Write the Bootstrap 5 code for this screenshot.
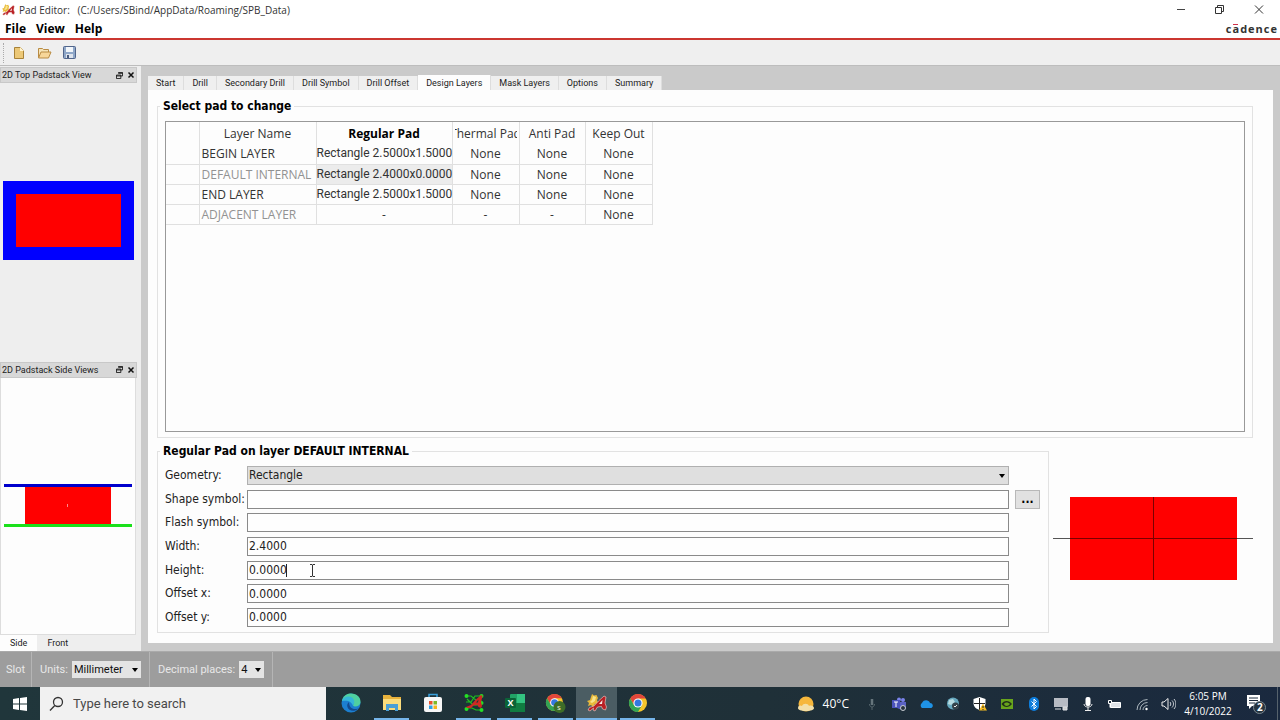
<!DOCTYPE html>
<html lang="en">
<head>
<meta charset="utf-8">
<meta name="viewport" content="width=device-width, initial-scale=1">
<title>Pad Editor</title>
<link rel="stylesheet" href="https://cdn.jsdelivr.net/npm/bootstrap@5.3.0/dist/css/bootstrap.min.css">
<style>
  :root { --ui: "DejaVu Sans Condensed", "DejaVu Sans", sans-serif; --segoe: "Open Sans", "Noto Sans", sans-serif; --small: Roboto, "Open Sans", sans-serif; }
  body { font: 12px/16px var(--segoe); color: #222; background: #cacaca; }
  svg { display: block; flex: none; }
  button { border: 0; background: none; padding: 0; color: inherit; }
  a { color: inherit; text-decoration: none; }

  .titlebar { height: 20px; background: #fff; padding-left: 2px; padding-right: 2px; }
  .titlebar .caption { font: 10px/16px var(--segoe); white-space: pre; color: #333; }
  .win-btn { width: 39px; height: 20px; }
  .menubar { height: 20px; background: #fff; border-bottom: 2px solid #cb3630; padding-left: 5px; gap: 10px; font: bold 12px/18px var(--segoe); color: #000; }
  .brand-word { font: bold 11px/14px var(--segoe); letter-spacing: 1px; color: #333; padding-right: 2px; }
  .toolstrip { height: 26px; background: #efefef; border-bottom: 1px solid #bdbdbd; }
  .tool-icons { gap: 11px; padding-left: 8px; }
  .grip { width: 1px; height: 20px; border-left: 1px dotted #aaa; margin-left: 3px; }

  .body-area { min-height: 0; }
  .docks { width: 141px; background: #eee; padding-top: 1px; }
  .dock-top { flex: 51 1 0; }
  .dock-side { flex: 50 1 0; }
  .dock-title { height: 16px; width: 137px; background: #d8d8d8; border: 1px solid #c8c8c8; font: 9px/14px var(--small); padding: 0 1px; gap: 4px; }
  .top-canvas { padding: 0 0 3px 3px; }
  .side-canvas { width: 136px; background: #fdfdfd; border: 1px solid #ddd; border-top: 0; }
  .dock-tabs { font: 9px/14px var(--small); height: 16px; }
  .dock-tabs button { padding: 0 10px; }
  .dock-tabs .on { background: #fdfdfd; }

  .work { padding: 9px 7px 8px 7px; min-width: 0; }
  .tabs { font: 9px/14px var(--small); height: 15px; }
  .tabs button { background: #efefef; border-right: 1px solid #ddd; padding: 0 8px; height: 14px; align-self: end; white-space: nowrap; }
  .tabs .on { background: #fdfdfd; height: 15px; }
  .sheet { background: #fdfdfd; padding: 16px 20px 10px 9px; gap: 13px; }
  .group { border: 1px solid #e2e2e2; padding: 0 7px 5px; position: relative; min-width: 0; }
  .group-name { font: bold 12px/16px var(--ui); color: #000; background: #fdfdfd; padding: 0 3px; margin: -9px 0 7px -5px; align-self: start; }
  .layer-box { border: 1px solid #999; }
  .layers { table-layout: fixed; width: 486px; border-collapse: collapse; text-align: center; color: #333; }
  .layers th, .layers td { border: 1px solid #e0e0e0; border-top: 0; border-left: 0; padding: 0 1px; height: 20px; line-height: 17px; white-space: nowrap; font-weight: 400; }
  .layers thead th { height: 22px; border-bottom: 0; }
  .layers .clip { display: flex; justify-content: center; overflow: hidden; margin: 0 1px; }
  .layers tbody th { text-align: left; padding-left: 2px; }
  .layers .geom { font-family: var(--small); padding: 0; }
  .dim { color: #929292; }
  .picked { background: #ececec; }

  .fields { display: grid; grid-template-columns: 82px minmax(0, 1fr) 31px; align-content: space-between; min-height: 161px; font: 12px/19px var(--ui); color: #222; }
  .fields .box { height: 19px; border: 1px solid #8a8a8a; border-radius: 0; padding: 0 1px; font: 12px/17px var(--ui); color: #222; background-color: #fefefe; min-height: 0; width: 100%; }
  .drop { appearance: none; border-radius: 0; background: #e1e1e1 url("data:image/svg+xml,%3Csvg xmlns='http://www.w3.org/2000/svg' width='6' height='4'%3E%3Cpath d='M0 0h6L3 4z'/%3E%3C/svg%3E") no-repeat right 3px center; }
  .fields .drop { background-color: #dfdfdf; border-color: #b0b0b0; }
  .more { width: 25px; height: 19px; background: #e1e1e1; border: 1px solid #b8b8b8; font: bold 12px/14px var(--ui); color: #000; justify-self: end; }
  .caret { position: absolute; left: 39px; top: 3px; width: 1px; height: 13px; background: #222; }
  .ibeam { position: absolute; left: 62px; top: 3px; }
  .preview { margin: 0 0 6px 4px; }

  .status { height: 36px; background: #9d9d9d; border-top: 1px solid #aaa; color: #e8e8e8; font-size: 11px; font-family: var(--small); }
  .status .cell { border-right: 1px solid #b5b5b5; height: 100%; padding: 0 8px; gap: 4px; }
  .status .cell:first-child { padding: 0 6px; }
  .status .drop { height: 17px; border: 0; padding: 0 2px; background-color: #e4e4e4; font: 11px/16px var(--small); color: #111; }

  .taskbar { height: 33px; background: linear-gradient(90deg, #20363b, #1f3038 60%, #1a293f); color: #fff; }
  .start { width: 40px; height: 33px; }
  .find { width: 286px; height: 33px; background: #f1f1f1; }
  .find input { border: 0; background: none; font: 13px/20px var(--small); outline: 0; min-width: 0; }
  .find input::placeholder { color: #484848; opacity: 1; }
  .apps { padding-left: 4px; }
  .app { width: 41px; height: 33px; border-bottom: 2px solid transparent; background-clip: padding-box; }
  .run::after { content: ""; position: absolute; left: 3px; right: 3px; bottom: -2px; height: 2px; background: #76b5ea; }
  .run.front { background: #4b5d63; }
  .run.front::after { left: 0; right: 0; }
  .weather { font-size: 12px; margin-right: 9px; }
  .tray button { width: 27px; height: 33px; }
  .clock { width: 52px; font-size: 10px; line-height: 15px; text-align: center; white-space: nowrap; }
  .note { width: 44px; height: 33px; border-right: 1px solid #56626c; margin-right: 2px; }
</style>
</head>
<body class="d-flex flex-column vh-100 overflow-hidden">

<svg width="0" height="0" class="position-absolute" aria-hidden="true">
  <defs>
    <symbol id="pad" viewBox="0 0 20 20">
      <path d="M5 1l2 1.500L9.500 2 11 5l-1 2 1 3-3 1-2 3-2-2-3 1 1-3-2-2 3-1 1-3z" fill="#e9b93a"/>
      <path d="M6 3l3 1-1 4-3 2-2-1 2-2z" fill="#f8e48b"/>
      <path d="M1 17l1.500-2.500L7 13l4.500-5L17 3l2 1-1 6 1.500 4-1 3-3-1-1-2.500-4 .5-2.500 4-2-1 .5-2L3 18z" fill="#b91f24" stroke="#f0d8d0" stroke-width=".6"/>
      <path d="M12 11l3.500-4-.5 4z" fill="#f8ece8"/>
    </symbol>
    <symbol id="chrome" viewBox="0 0 20 20">
      <circle cx="10" cy="10" r="9" fill="#f5c52c"/>
      <path d="M2.200 5.500A9 9 0 0 1 17.800 5.500H10L6 12z" fill="#e2463b"/>
      <path d="M2.200 5.500A9 9 0 0 0 10 19l4-6.700H6z" fill="#33a455"/>
      <circle cx="10" cy="10" r="4.600" fill="#fff"/><circle cx="10" cy="10" r="3.500" fill="#3478e0"/>
    </symbol>
    <symbol id="float" viewBox="0 0 8 8"><path d="M2.500 .5h5v4h-2M.5 3.500h5v4h-5zM2.500 1.500h5M.5 4.500h5" fill="none" stroke="#111"/></symbol>
    <symbol id="shut" viewBox="0 0 8 8"><path d="M1.500 1.500l5 5M6.500 1.500l-5 5" stroke="#111" stroke-width="1.500"/></symbol>
  </defs>
</svg>

<header>
  <div class="titlebar d-flex align-items-center">
    <svg width="13" height="14"><use href="#pad"/></svg>
    <span class="caption ms-1">Pad Editor:   (C:/Users/SBind/AppData/Roaming/SPB_Data)</span>
    <div class="ms-auto d-flex">
      <button class="win-btn d-grid" aria-label="Minimize"><svg class="m-auto" width="10" height="10"><path d="M1 4.500h8" stroke="#444"/></svg></button>
      <button class="win-btn d-grid" aria-label="Restore"><svg class="m-auto" width="10" height="10"><path d="M.5 2.500h6v6h-6zM2.500 2V.5h6v6H7" fill="none" stroke="#333"/></svg></button>
      <button class="win-btn d-grid" aria-label="Close"><svg class="m-auto" width="10" height="10"><path d="M1 .5l8 8M9 .5l-8 8" stroke="#333"/></svg></button>
    </div>
  </div>
  <nav class="menubar d-flex align-items-center">
    <a href="#">File</a><a href="#">View</a><a href="#">Help</a>
    <span class="brand-word ms-auto">c<span class="position-relative">a<svg class="position-absolute" style="left:1px;top:3px" width="5" height="1"><path d="M0 .5h5" stroke="#d0304a"/></svg></span>dence</span>
  </nav>
  <div class="toolstrip d-flex align-items-center">
    <div class="grip"></div>
    <div class="tool-icons d-flex align-items-center">
      <button aria-label="New"><svg width="14" height="14"><path d="M2.500 1.500h6l3 3v8h-9z" fill="#ecc877" stroke="#a88238"/><path d="M8 1l4 4H8z" fill="#fff3d0"/></svg></button>
      <button aria-label="Open"><svg width="15" height="14"><path d="M1.500 11.500v-9h4l1 1h5v3" fill="#f6e4b8" stroke="#b98b43"/><path d="M1.500 12l2.500-6h10l-2.500 6z" fill="#f7d699" stroke="#b98b43"/></svg></button>
      <button aria-label="Save"><svg width="13" height="13"><rect x=".5" y=".5" width="12" height="12" rx="1" fill="#8fa7c8" stroke="#51658b"/><path d="M3 1h7v5H3z" fill="#f2f6fa"/><path d="M3 8h7v4H3z" fill="#dde3ec"/><path d="M4 9h2v3H4z" fill="#485a7e"/></svg></button>
    </div>
  </div>
</header>

<main class="body-area d-flex flex-grow-1">
  <aside class="docks d-flex flex-column flex-shrink-0">
    <section class="dock-top d-flex flex-column">
      <div class="dock-title d-flex align-items-center">
        <span class="me-auto">2D Top Padstack View</span>
        <button aria-label="Float"><svg width="7" height="7"><use href="#float"/></svg></button>
        <button aria-label="Close"><svg width="8" height="8"><use href="#shut"/></svg></button>
      </div>
      <div class="top-canvas flex-grow-1 d-flex align-items-center">
        <svg width="131" height="79"><path fill="#00f" d="M0 0h131v79H0z"/><path fill="#f00" d="M13 13h105v53H13z"/></svg>
      </div>
    </section>
    <section class="dock-side d-flex flex-column">
      <div class="dock-title d-flex align-items-center">
        <span class="me-auto">2D Padstack Side Views</span>
        <button aria-label="Float"><svg width="7" height="7"><use href="#float"/></svg></button>
        <button aria-label="Close"><svg width="8" height="8"><use href="#shut"/></svg></button>
      </div>
      <div class="side-canvas flex-grow-1 d-flex align-items-center justify-content-center">
        <svg width="128" height="43"><path fill="#f00" d="M21 2h86v39H21z"/><path fill="#00c" d="M0 0h128v3H0z"/><path fill="#1be01b" d="M0 40h128v3H0z"/><path d="M63.500 20v3" stroke="#ff8a8a"/></svg>
      </div>
      <div class="dock-tabs d-flex"><button class="on">Side</button><button>Front</button></div>
    </section>
  </aside>

  <div class="work flex-grow-1 d-flex flex-column">
    <div class="tabs d-flex" role="tablist">
      <button>Start</button><button>Drill</button><button>Secondary Drill</button><button>Drill Symbol</button><button>Drill Offset</button><button class="on">Design Layers</button><button>Mask Layers</button><button>Options</button><button>Summary</button>
    </div>
    <div class="sheet flex-grow-1 d-flex flex-column">
      <section class="group flex-grow-1 d-flex flex-column">
        <h2 class="group-name">Select pad to change</h2>
        <div class="layer-box flex-grow-1">
          <table class="layers">
            <colgroup><col style="width:33px"><col style="width:117px"><col style="width:136px"><col style="width:67px"><col style="width:66px"><col style="width:67px"></colgroup>
            <thead><tr><th></th><th>Layer Name</th><th class="fw-bold text-black">Regular Pad</th><th><span class="clip">Thermal Pad</span></th><th>Anti Pad</th><th>Keep Out</th></tr></thead>
            <tbody>
              <tr><td></td><th>BEGIN LAYER</th><td class="geom">Rectangle 2.5000x1.5000</td><td>None</td><td>None</td><td>None</td></tr>
              <tr><td></td><th class="dim">DEFAULT INTERNAL</th><td class="geom picked">Rectangle 2.4000x0.0000</td><td>None</td><td>None</td><td>None</td></tr>
              <tr><td></td><th>END LAYER</th><td class="geom">Rectangle 2.5000x1.5000</td><td>None</td><td>None</td><td>None</td></tr>
              <tr><td></td><th class="dim">ADJACENT LAYER</th><td>-</td><td>-</td><td>-</td><td>None</td></tr>
            </tbody>
          </table>
        </div>
      </section>
      <div class="d-flex">
        <section class="group flex-grow-1 d-flex flex-column pe-2">
          <h2 class="group-name">Regular Pad on layer DEFAULT INTERNAL</h2>
          <form class="fields">
            <label for="geo">Geometry:</label><select id="geo" class="box drop"><option>Rectangle</option></select><span></span>
            <label for="shp">Shape symbol:</label><input id="shp" class="box"><button type="button" class="more">...</button>
            <label for="fls">Flash symbol:</label><input id="fls" class="box"><span></span>
            <label for="wid">Width:</label><input id="wid" class="box" value="2.4000"><span></span>
            <label for="hei">Height:</label><div class="position-relative"><input id="hei" class="box d-block" value="0.0000"><span class="caret"></span><svg class="ibeam" width="7" height="13"><path d="M1 .5h2l.5.5.5-.5h2M3.500 1v11M1 12.500h2l.5-.5.5.5h2" fill="none" stroke="#333"/></svg></div><span></span>
            <label for="ofx">Offset x:</label><input id="ofx" class="box" value="0.0000"><span></span>
            <label for="ofy">Offset y:</label><input id="ofy" class="box" value="0.0000"><span></span>
          </form>
        </section>
        <svg class="preview align-self-center" width="200" height="84"><path fill="#f00" d="M17 0h167v83H17z"/><path d="M0 41.500h17m167 0h16" stroke="#555"/><path d="M17 41.500h167M100.500 0v83" stroke="#7a0000"/></svg>
      </div>
    </div>
  </div>
</main>

<footer>
  <div class="status d-flex align-items-center">
    <div class="cell d-flex align-items-center">Slot</div>
    <div class="cell d-flex align-items-center"><label for="unit">Units:</label><select id="unit" class="drop" style="width:69px"><option>Millimeter</option></select></div>
    <div class="cell d-flex align-items-center"><label for="dec">Decimal places:</label><select id="dec" class="drop" style="width:25px"><option>4</option></select></div>
  </div>
  <div class="taskbar d-flex align-items-center">
    <button class="start d-grid" aria-label="Start"><svg class="m-auto" width="14" height="14"><path fill="#fff" d="M0 2l6-1v5.500H0zM7 1l7-1v6.500H7zM0 7.500h6V13l-6-1zM7 7.500h7V14l-7-1z"/></svg></button>
    <div class="find d-flex align-items-center">
      <svg class="ms-2" width="17" height="16"><circle cx="10" cy="6" r="4.500" fill="none" stroke="#333" stroke-width="1.300"/><path d="M6.800 9.500L2 14.500" stroke="#333" stroke-width="1.300"/></svg>
      <input class="ms-2 p-0 flex-grow-1" placeholder="Type here to search" aria-label="Search">
    </div>
    <div class="apps d-flex">
      <button class="app d-grid position-relative" aria-label="Edge"><svg class="m-auto" width="20" height="20"><circle cx="10" cy="10" r="9.500" fill="#1c7fd0"/><path d="M1 8C2 2 7 .5 10 .5c6 0 10 4 9.500 9-.5 4-6 5-7.500 3 3-5-5-9-11-4.500z" fill="#4fd0a0"/><path d="M1 8C3 3 8 3 10 4c4 2 4 6 2 8.500C10 9 8 7 1 8z" fill="#35b6d9"/><path d="M8 9c-4 3-1 10 6 8.500 2-.5 3-2 3-2-5 2-9-1-9-6.500z" fill="#134a8e"/></svg></button>
      <button class="app run d-grid position-relative" aria-label="File Explorer"><svg class="m-auto" width="20" height="18"><path d="M1 1h7l2 2h9v13H1z" fill="#e8b23c"/><path d="M1 5h18v11H1z" fill="#fbdc7c"/><path d="M4 17v-7h12v7h-3v-3H7v3z" fill="#4b9fd6"/></svg></button>
      <button class="app d-grid position-relative" aria-label="Store"><svg class="m-auto" width="20" height="20"><path d="M6 5V1.500h8V5" fill="none" stroke="#3aa0dc" stroke-width="1.500"/><rect x="1" y="4" width="18" height="15" rx="2" fill="#f7f7f7"/><path fill="#e8532f" d="M6 8h3.500v3.500H6z"/><path fill="#7cb928" d="M10.500 8H14v3.500h-3.500z"/><path fill="#2b9fe4" d="M6 12.500h3.500V16H6z"/><path fill="#f7b51c" d="M10.500 12.500H14V16h-3.500z"/></svg></button>
      <button class="app run d-grid position-relative" aria-label="PCB Editor"><svg class="m-auto" width="20" height="20"><path d="M2 3h5l6 5h5M2 9h5l4-6h7M2 15h6l4 2h6M3 6l6 6h9" fill="none" stroke="#1fc01f" stroke-width="1.200"/><g fill="#25e025"><circle cx="2.500" cy="3" r="2"/><circle cx="2.500" cy="16" r="2"/><circle cx="17.500" cy="3" r="2"/><circle cx="17.500" cy="17" r="2"/><circle cx="17.500" cy="10" r="2"/></g><path d="M2 14l5-2 4.500-5L17 2l1.500 1L17 9l1 4-1 2-2.500-1-1-2-4 .5L7 15l-4 0z" fill="#d02822"/><path d="M12 9.500l2.500-3-.5 3z" fill="#20363b"/></svg></button>
      <button class="app run d-grid position-relative" aria-label="Excel"><svg class="m-auto" width="20" height="18"><rect x="5" width="15" height="18" rx="1" fill="#21a366"/><path d="M12 0h8v9h-8z" fill="#33c481"/><path d="M5 9h15v9H5z" fill="#107c41"/><rect y="4" width="11" height="10" rx="1" fill="#0b6337"/><text x="2.500" y="12" font-size="9" font-weight="bold" fill="#fff">X</text></svg></button>
      <button class="app run d-grid position-relative" aria-label="Chrome, profile S"><svg class="m-auto" width="21" height="20"><use href="#chrome" width="19" height="19"/><circle cx="14.500" cy="14" r="6" fill="#3e6d28"/><text x="12" y="17" font-size="8" fill="#e8f0d8">s</text></svg></button>
      <button class="app run front d-grid position-relative" aria-label="Pad Editor"><svg class="m-auto" width="20" height="20"><use href="#pad"/></svg></button>
      <button class="app run d-grid position-relative" aria-label="Chrome"><svg class="m-auto" width="20" height="20"><use href="#chrome"/></svg></button>
    </div>
    <button class="weather ms-auto d-flex align-items-center"><svg width="18" height="18"><circle cx="9" cy="9" r="7.500" fill="#f6b73c"/><path d="M1 13c0-3 3-3 4-2 1-3 6-3 7 0 2-1 5 0 5 2 0 2-3 3-8 3s-8-1-8-3z" fill="#f3dfa8"/></svg><span class="ms-2">40°C</span></button>
    <div class="tray d-flex">
      <button class="d-grid" aria-label="Microphone idle"><svg class="m-auto" width="14" height="14"><path d="M7 2v6" stroke="#66757c" stroke-width="2.500"/><path d="M4.500 7c0 4 5 4 5 0M7 10v3" fill="none" stroke="#56666d"/></svg></button>
      <button class="d-grid" aria-label="Teams"><svg class="m-auto" width="14" height="14"><circle cx="11" cy="3" r="2" fill="#7b83eb"/><circle cx="7" cy="2.500" r="2" fill="#7b83eb"/><path d="M5 5h9v5l-4 3-5-2z" fill="#5a62c3"/><rect y="3" width="8" height="8" fill="#4b53bc"/><path d="M2 5h4M4 5v5" stroke="#fff"/><circle cx="11" cy="11" r="2.500" fill="#26323e" stroke="#c7ccd2"/></svg></button>
      <button class="d-grid" aria-label="OneDrive"><svg class="m-auto" width="14" height="14"><path d="M3 11a3 3 0 0 1 0-5c2-4 7-3 8 0 3 0 4 4 1 5z" fill="#1f93e6"/></svg></button>
      <button class="d-grid" aria-label="Network globe"><svg class="m-auto" width="14" height="14"><circle cx="7" cy="6.500" r="6" fill="#67a9bf"/><path d="M3 3l4-1 2 3-4 3-3-1z" fill="#b7dbe0"/><circle cx="9.500" cy="9" r="3.500" fill="#35434a"/><path d="M8 9l1 1 2-2" fill="none" stroke="#eee"/></svg></button>
      <button class="d-grid" aria-label="Security"><svg class="m-auto" width="14" height="14"><path d="M6.500 0l6 2v4c0 4-3 6-6 7-3-1-6-3-6-7V2z" fill="#fff"/><path d="M6.500 1v12M1 6.500h11" stroke="#222"/><path d="M10 6.500l4 7H6z" fill="#f6bd22"/><path d="M10 9v2M10 12v1" stroke="#222"/></svg></button>
      <button class="d-grid" aria-label="NVIDIA"><svg class="m-auto" width="14" height="14"><path d="M1 2h12v10H1z" fill="#68a51c"/><path d="M1.500 7C4 3 9 3 12 7c-3 4-8 4-10.500 0z" fill="#203018"/><path d="M4 7c1-2 4-2 6 0-2 2.500-5 2.500-6 0z" fill="#68a51c"/></svg></button>
      <button class="d-grid" aria-label="Bluetooth"><svg class="m-auto" width="14" height="14"><rect x="2" width="10" height="14" rx="5" fill="#0e7ddb"/><path d="M4.500 4.500l5 5L7 12V2l2.500 2.500-5 5" fill="none" stroke="#fff"/></svg></button>
      <button class="d-grid" aria-label="Device"><svg class="m-auto" width="14" height="14"><path d="M0 1h14v9H0z" fill="#b8bcc4"/><path d="M1 12h6M9 10h4v3H9z" stroke="#dfe2e6" fill="#ccc"/></svg></button>
      <button class="d-grid" aria-label="Microphone"><svg class="m-auto" width="14" height="14"><rect x="4.500" y="0" width="5" height="9" rx="2" fill="#fff"/><path d="M3 7c0 4 8 4 8 0M7 10v3M4 13.500h6" fill="none" stroke="#eee"/></svg></button>
      <button class="d-grid" aria-label="Battery"><svg class="m-auto" width="15" height="14"><path d="M3.500 5.500h10v5h-10z" fill="#dfe3e8" stroke="#fff"/><path d="M1.500 3.500h3v3h-3zM3 6.500v4" fill="#1c2b3a" stroke="#fff"/></svg></button>
      <button class="d-grid" aria-label="Wi-Fi"><svg class="m-auto" width="14" height="14"><g fill="none" stroke="#aeb9c0"><path d="M2 13A10.500 10.500 0 0 1 12.500 2.500M5 13a7.500 7.500 0 0 1 7.500-7.500M8 13a4.500 4.500 0 0 1 4.500-4.500"/></g><circle cx="11.500" cy="12" r="1.200" fill="#fff"/></svg></button>
      <button class="d-grid" aria-label="Volume"><svg class="m-auto" width="15" height="14"><path d="M1 5h2l4-3.500v11L3 9H1z" fill="none" stroke="#eee"/><path d="M9 5c1 1 1 3 0 4M11 3.500c2 2 2 5 0 7M13 2c2.500 3 2.500 7 0 10" fill="none" stroke="#c6ccd2"/></svg></button>
    </div>
    <div class="clock">6:05 PM<br>4/10/2022</div>
    <button class="note d-grid" aria-label="Notifications"><svg class="m-auto" width="22" height="22"><path d="M2 2h13v11H7l-3 3v-3H2z" fill="#fff"/><path d="M4 5h9M4 7.500h9M4 10h6" stroke="#1a2a3c"/><circle cx="14.500" cy="14.500" r="6" fill="#26343f" stroke="#7a8790"/><text x="12" y="18" font-size="10" font-weight="bold" fill="#fff">2</text></svg></button>
  </div>
</footer>
<script src="https://cdn.jsdelivr.net/npm/bootstrap@5.3.0/dist/js/bootstrap.bundle.min.js"></script>
</body>
</html>
